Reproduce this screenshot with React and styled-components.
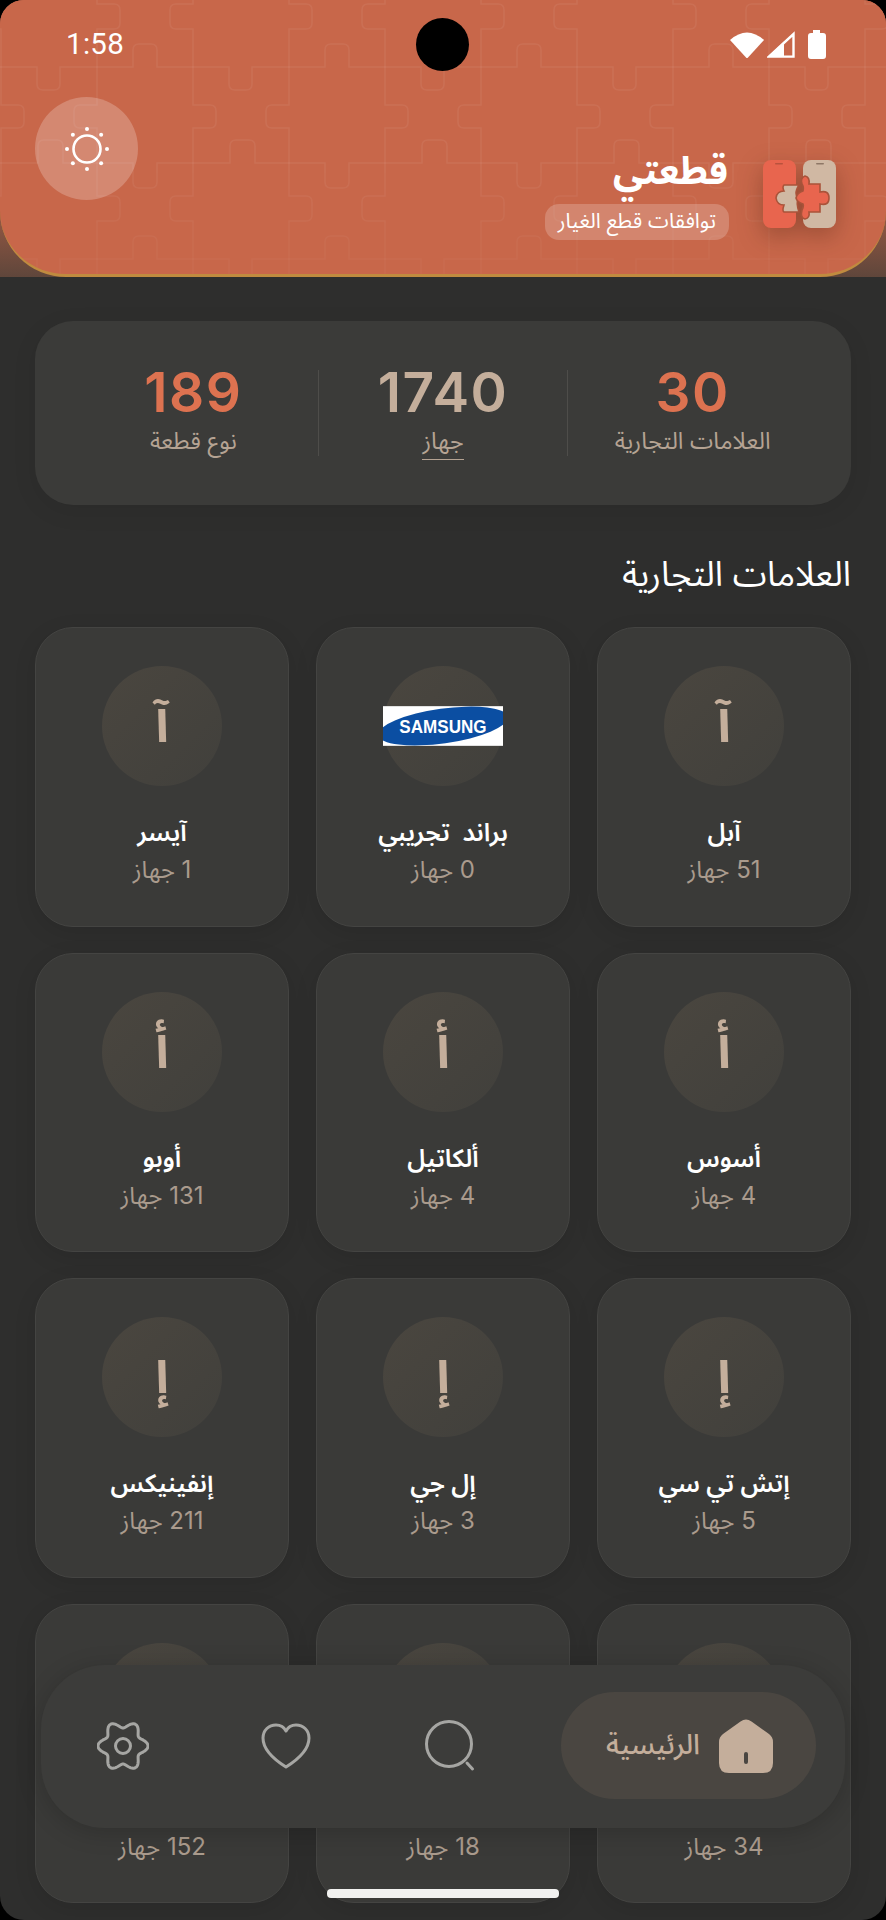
import React from "react";
import styled, { createGlobalStyle } from "styled-components";

const GlobalStyle = createGlobalStyle`
  html, body { margin: 0; padding: 0; background: #000; }
  * { box-sizing: border-box; }
`;

const ARABIC = `"Inter", "Noto Sans Arabic", "Noto Kufi Arabic", "DejaVu Sans", sans-serif`;
const TAN = "#c4ae9b";

const Screen = styled.div`
  position: relative;
  width: 886px;
  height: 1920px;
  overflow: hidden;
  border-radius: 24px;
  background: #2e2e2d;
  font-family: ${ARABIC};
  direction: rtl;
`;

const HeaderBackdrop = styled.div`
  height: 277px;
  background: linear-gradient(180deg, #c8674a 0%, #c8674a 62%, #8f5642 80%, #5f463b 100%);
`;

const Header = styled.header`
  position: relative;
  height: 277px;
  overflow: hidden;
  background: #c8674a;
  border-bottom: 3px solid #c08b3f;
  border-radius: 0 0 66px 66px;
`;

const PuzzleOverlay = styled.svg`
  position: absolute;
  inset: 0;
  width: 100%;
  height: 100%;
  -webkit-mask-image: linear-gradient(180deg, #000 0%, #000 60%, rgba(0, 0, 0, 0.45) 100%);
  mask-image: linear-gradient(180deg, #000 0%, #000 60%, rgba(0, 0, 0, 0.45) 100%);
`;

const StatusBar = styled.div`
  position: relative;
  direction: ltr;
  display: flex;
  align-items: center;
  justify-content: space-between;
  height: 88px;
  padding: 0 60px 0 66px;
`;

const Clock = styled.span`
  font-family: Roboto, sans-serif;
  font-size: 29.5px;
  letter-spacing: 0.3px;
  color: #fff;
`;

const Camera = styled.div`
  position: absolute;
  left: 416px;
  top: 18px;
  width: 53px;
  height: 53px;
  border-radius: 50%;
  background: #000;
`;

const StatusIcons = styled.div`
  display: flex;
  align-items: center;
  gap: 3px;
`;

const BrandRow = styled.div`
  position: relative;
  display: flex;
  align-items: flex-start;
  justify-content: space-between;
  padding: 9px 50px 0 35px;
`;

const Brand = styled.div`
  display: flex;
  gap: 35px;
  margin-top: 48px;
`;

const LogoMark = styled.svg`
  width: 73px;
  height: 68px;
  margin-top: 15px;
  filter: drop-shadow(0 8px 12px rgba(70, 30, 15, 0.35));
`;

const BrandText = styled.div`
  display: flex;
  flex-direction: column;
  align-items: flex-start;
`;

const BrandTitle = styled.h1`
  margin: 0;
  height: 59px;
  font-size: 38px;
  line-height: 50px;
  font-weight: 700;
  color: #fff;
`;

const BrandTag = styled.span`
  margin-right: -1px;
  padding: 0 13px;
  height: 36px;
  line-height: 34px;
  font-size: 21px;
  color: #fff;
  background: rgba(255, 255, 255, 0.2);
  border-radius: 14px;
`;

const ThemeButton = styled.button`
  width: 103px;
  height: 103px;
  padding: 0;
  display: flex;
  align-items: center;
  justify-content: center;
  border: 0;
  border-radius: 50%;
  background: rgba(255, 255, 255, 0.22);
`;

const Main = styled.main`
  padding: 44px 35px 0;
`;

const Stats = styled.section`
  display: flex;
  height: 184px;
  padding: 49px 34px 0;
  background: #3b3b39;
  border-radius: 38px;
  box-shadow: 0 6px 24px rgba(0, 0, 0, 0.08);
`;

const Stat = styled.div`
  flex: 1;
  height: 86px;
  display: flex;
  flex-direction: column;
  align-items: center;
  border-left: ${(p) => (p.$divider ? "1px solid #4e4d4a" : "0")};
`;

const StatValue = styled.div`
  height: 46px;
  font-size: 55px;
  line-height: 44px;
  font-weight: 600;
  letter-spacing: 1.5px;
  color: ${(p) => p.$color};
`;

const StatLabel = styled.div`
  flex: none;
  margin-top: 11px;
  font-size: 23.5px;
  line-height: 32px;
  padding-bottom: 2px;
  color: #b5a393;
  border-bottom: ${(p) => (p.$link ? "1px solid #b5a393" : "0")};
`;

const SectionTitle = styled.h2`
  margin: 46px 0 31px;
  height: 45px;
  font-size: 34.5px;
  line-height: 45px;
  font-weight: 400;
  color: #fff;
`;

const BrandGrid = styled.div`
  display: grid;
  grid-template-columns: repeat(3, 254px);
  grid-auto-rows: 299.5px;
  column-gap: 27px;
  row-gap: 26px;
`;

const Card = styled.article`
  display: flex;
  flex-direction: column;
  align-items: center;
  padding-top: 38px;
  background: #3a3a38;
  border: 1.5px solid #444442;
  border-radius: 38px;
  box-shadow: 0 6px 22px rgba(0, 0, 0, 0.1);
`;

const Avatar = styled.div`
  width: 120px;
  height: 120px;
  flex: none;
  display: flex;
  align-items: center;
  justify-content: center;
  border-radius: 50%;
  background: linear-gradient(135deg, #4a463f, #41403c);
  font-size: 50px;
  font-weight: 700;
  color: ${TAN};
`;

const CardName = styled.div`
  margin-top: 28px;
  font-size: 25px;
  line-height: 36px;
  font-weight: 600;
  white-space: pre;
  color: #fff;
`;

const CardCount = styled.div`
  margin-top: 4px;
  font-size: 24px;
  line-height: 32px;
  color: #aa9b8d;
`;

const BottomNav = styled.nav`
  position: absolute;
  left: 41px;
  top: 1665px;
  width: 804px;
  height: 163px;
  display: flex;
  align-items: center;
  padding-right: 29px;
  background: #3c3c3a;
  border-radius: 64px;
  box-shadow: 0 4px 24px rgba(0, 0, 0, 0.18);
`;

const ActivePill = styled.div`
  width: 255px;
  height: 107px;
  margin-left: 31px;
  margin-top: -2px;
  padding-right: 43px;
  display: flex;
  align-items: center;
  gap: 19px;
  background: #4a4641;
  border-radius: 54px;
  font-size: 28px;
  font-weight: 500;
  color: ${TAN};
`;

const NavItem = styled.div`
  width: 163px;
  height: 107px;
  margin-top: -2px;
  display: flex;
  align-items: center;
  justify-content: center;
`;

const HomeBar = styled.div`
  position: absolute;
  left: 327px;
  top: 1889px;
  width: 232px;
  height: 9px;
  border-radius: 4px;
  background: #f1f1ef;
`;

const gearPath = (() => {
  const pts = [];
  for (let i = 0; i < 180; i++) {
    const t = (i / 180) * Math.PI * 2;
    const r = 21.5 + 3.5 * Math.cos(6 * t);
    pts.push(`${(26 + r * Math.cos(t)).toFixed(2)} ${(26 + r * Math.sin(t)).toFixed(2)}`);
  }
  return `M${pts.join("L")}Z`;
})();

const PuzzleTile = () => (
  <g fill="none" stroke="rgba(255,255,255,0.06)" strokeWidth="1.5">
    <path d="M0 67H37V84Q37 90 43 90H54Q60 90 60 84V67H133V50Q133 44 139 44H151Q157 44 157 50V67H192" />
    <path d="M0 163H38V146Q38 140 44 140H57Q63 140 63 146V163H133V182Q133 188 139 188H151Q157 188 157 182V163H192" />
    <path d="M97 0V4H114Q120 4 120 10V23Q120 29 114 29H97V105H80Q74 105 74 111V122Q74 128 80 128H97V192" />
    <path d="M1 0V4H-16Q-22 4 -22 10V23Q-22 29 -16 29H1V105H18Q24 105 24 111V122Q24 128 18 128H1V192" />
    <path d="M193 0V4H176Q170 4 170 10V23Q170 29 176 29H193V105H210Q216 105 216 111V122Q216 128 210 128H193V192" />
  </g>
);

const WifiIcon = () => (
  <svg width="34" height="27" viewBox="0 0 34 27"><path fill="#fff" d="M0 9Q17 -6 34 9L18 26.5Q17 27.5 16 26.5Z" /></svg>
);
const SignalIcon = () => (
  <svg width="28" height="27" viewBox="0 0 28 27">
    <path fill="#fff" d="M17 10.5V25H2Z" />
    <path fill="none" stroke="#fff" strokeWidth="2.4" strokeLinejoin="miter" d="M26.5 3V25.6H2L26.5 3Z" />
  </svg>
);
const BatteryIcon = () => (
  <svg width="18" height="29" viewBox="0 0 18 29" style={{ marginLeft: 10 }}>
    <path fill="#fff" d="M5 0H12V3H15Q18 3 18 6V26Q18 29 15 29H3Q0 29 0 26V6Q0 3 3 3H5Z" />
  </svg>
);

const SunIcon = () => (
  <svg width="52" height="52" viewBox="0 0 52 52">
    <circle cx="26" cy="26" r="13.5" fill="none" stroke="#fff" strokeWidth="2.6" />
    {[0, 45, 90, 135, 180, 225, 270, 315].map((a) => (
      <circle
        key={a}
        cx={26 + 20 * Math.cos((a * Math.PI) / 180)}
        cy={26 + 20 * Math.sin((a * Math.PI) / 180)}
        r="2"
        fill="#fff"
      />
    ))}
  </svg>
);

const Logo = () => (
  <LogoMark viewBox="0 0 73 68">
    <rect x="0" y="0" width="33" height="68" rx="8" fill="#e8654e" />
    <rect x="40" y="0" width="33" height="68" rx="8" fill="#d0b8a3" />
    <rect x="12" y="3" width="8" height="1.6" rx="0.8" fill="#b9523d" />
    <rect x="53" y="3" width="8" height="1.6" rx="0.8" fill="#8e7766" />
    <path
      fill="#d0b8a3"
      stroke="#a9533a"
      strokeWidth="1.6"
      d="M21 25H36Q33 30 33 33Q33 36 35 39Q33 43 36 52H21Q19 51 21 45Q14 45 13 38Q14 31 21 31Q19 27 21 25Z"
    />
    <path
      fill="#e8654e"
      stroke="#a9533a"
      strokeWidth="1.6"
      d="M42 16Q47 17 46 24H57V32Q66 30 66 38Q66 46 57 44V52H46Q47 58 42 59Q37 58 39 50Q41 46 40 44Q34 42 33 38Q34 33 40 31Q41 27 39 24Q37 18 42 16Z"
    />
  </LogoMark>
);

const SamsungLogo = () => (
  <svg width="121" height="40" viewBox="0 0 121 40">
    <rect width="121" height="40" fill="#fff" />
    <ellipse cx="60.5" cy="20" rx="66" ry="17.5" fill="#0b4ea2" transform="rotate(-8 60.5 20)" />
    <text
      x="60.5"
      y="27"
      textAnchor="middle"
      fontFamily="Liberation Sans, sans-serif"
      fontWeight="700"
      fontSize="19"
      textLength="88"
      lengthAdjust="spacingAndGlyphs"
      fill="#fff"
    >
      SAMSUNG
    </text>
  </svg>
);

const stroke = { fill: "none", stroke: "#a6a6a3", strokeWidth: 3, strokeLinecap: "round", strokeLinejoin: "round" };

const GearIcon = () => (
  <svg width="52" height="52" viewBox="0 0 52 52">
    <path {...stroke} d={gearPath} />
    <circle {...stroke} cx="26" cy="26" r="7.5" />
  </svg>
);
const HeartIcon = () => (
  <svg width="52" height="48" viewBox="0 0 52 48">
    <path {...stroke} d="M26 45C18 40 3 30 3 16C3 8 9 3 16 3C20.5 3 24 5 26 9C28 5 31.5 3 36 3C43 3 49 8 49 16C49 30 34 40 26 45Z" />
  </svg>
);
const SearchIcon = () => (
  <svg width="54" height="54" viewBox="0 0 54 54">
    <circle {...stroke} cx="27" cy="25" r="22.5" />
    <path {...stroke} d="M45 44L50.5 50" />
  </svg>
);
const HomeIcon = () => (
  <svg width="54" height="54" viewBox="0 0 54 54">
    <path fill={TAN} d="M21.5 2.5Q27 -1.5 32.5 2.5L50 15Q54 18 54 23V44Q54 54 44 54H10Q0 54 0 44V23Q0 18 4 15Z" />
    <rect x="25" y="33" width="4" height="12" rx="2" fill="#4a4641" />
  </svg>
);

const BRANDS = [
  { letter: "آ", name: "آبل", count: 51 },
  { name: "براند  تجريبي", count: 0, logo: true },
  { letter: "آ", name: "آيسر", count: 1 },
  { letter: "أ", name: "أسوس", count: 4 },
  { letter: "أ", name: "ألكاتيل", count: 4 },
  { letter: "أ", name: "أوبو", count: 131 },
  { letter: "إ", name: "إتش تي سي", count: 5 },
  { letter: "إ", name: "إل جي", count: 3 },
  { letter: "إ", name: "إنفينيكس", count: 211 },
  { letter: "ب", name: "", count: 34 },
  { letter: "ب", name: "", count: 18 },
  { letter: "ت", name: "", count: 152 },
];

export default function App() {
  return (
    <>
      <GlobalStyle />
      <Screen>
        <HeaderBackdrop>
          <Header>
            <PuzzleOverlay aria-hidden="true">
              <defs>
                <pattern id="puzzle" width="192" height="192" patternUnits="userSpaceOnUse" x="0" y="0">
                  <PuzzleTile />
                </pattern>
              </defs>
              <rect width="100%" height="100%" fill="url(#puzzle)" />
            </PuzzleOverlay>
            <StatusBar>
              <Clock>1:58</Clock>
              <StatusIcons>
                <WifiIcon />
                <SignalIcon />
                <BatteryIcon />
              </StatusIcons>
            </StatusBar>
            <Camera />
            <BrandRow>
              <Brand>
                <Logo />
                <BrandText>
                  <BrandTitle>قطعتي</BrandTitle>
                  <BrandTag>توافقات قطع الغيار</BrandTag>
                </BrandText>
              </Brand>
              <ThemeButton aria-label="theme">
                <SunIcon />
              </ThemeButton>
            </BrandRow>
          </Header>
        </HeaderBackdrop>
        <Main>
          <Stats>
            <Stat $divider>
              <StatValue $color="#dd7250">30</StatValue>
              <StatLabel>العلامات التجارية</StatLabel>
            </Stat>
            <Stat $divider>
              <StatValue $color={TAN}>1740</StatValue>
              <StatLabel $link>جهاز</StatLabel>
            </Stat>
            <Stat>
              <StatValue $color="#dd7250">189</StatValue>
              <StatLabel>نوع قطعة</StatLabel>
            </Stat>
          </Stats>
          <SectionTitle>العلامات التجارية</SectionTitle>
          <BrandGrid>
            {BRANDS.map((b, i) => (
              <Card key={i}>
                <Avatar>{b.logo ? <SamsungLogo /> : b.letter}</Avatar>
                <CardName>{b.name || "\u00a0"}</CardName>
                <CardCount>{b.count} جهاز</CardCount>
              </Card>
            ))}
          </BrandGrid>
        </Main>
        <BottomNav>
          <ActivePill>
            <HomeIcon />
            <span>الرئيسية</span>
          </ActivePill>
          <NavItem><SearchIcon /></NavItem>
          <NavItem><HeartIcon /></NavItem>
          <NavItem><GearIcon /></NavItem>
        </BottomNav>
        <HomeBar />
      </Screen>
    </>
  );
}
